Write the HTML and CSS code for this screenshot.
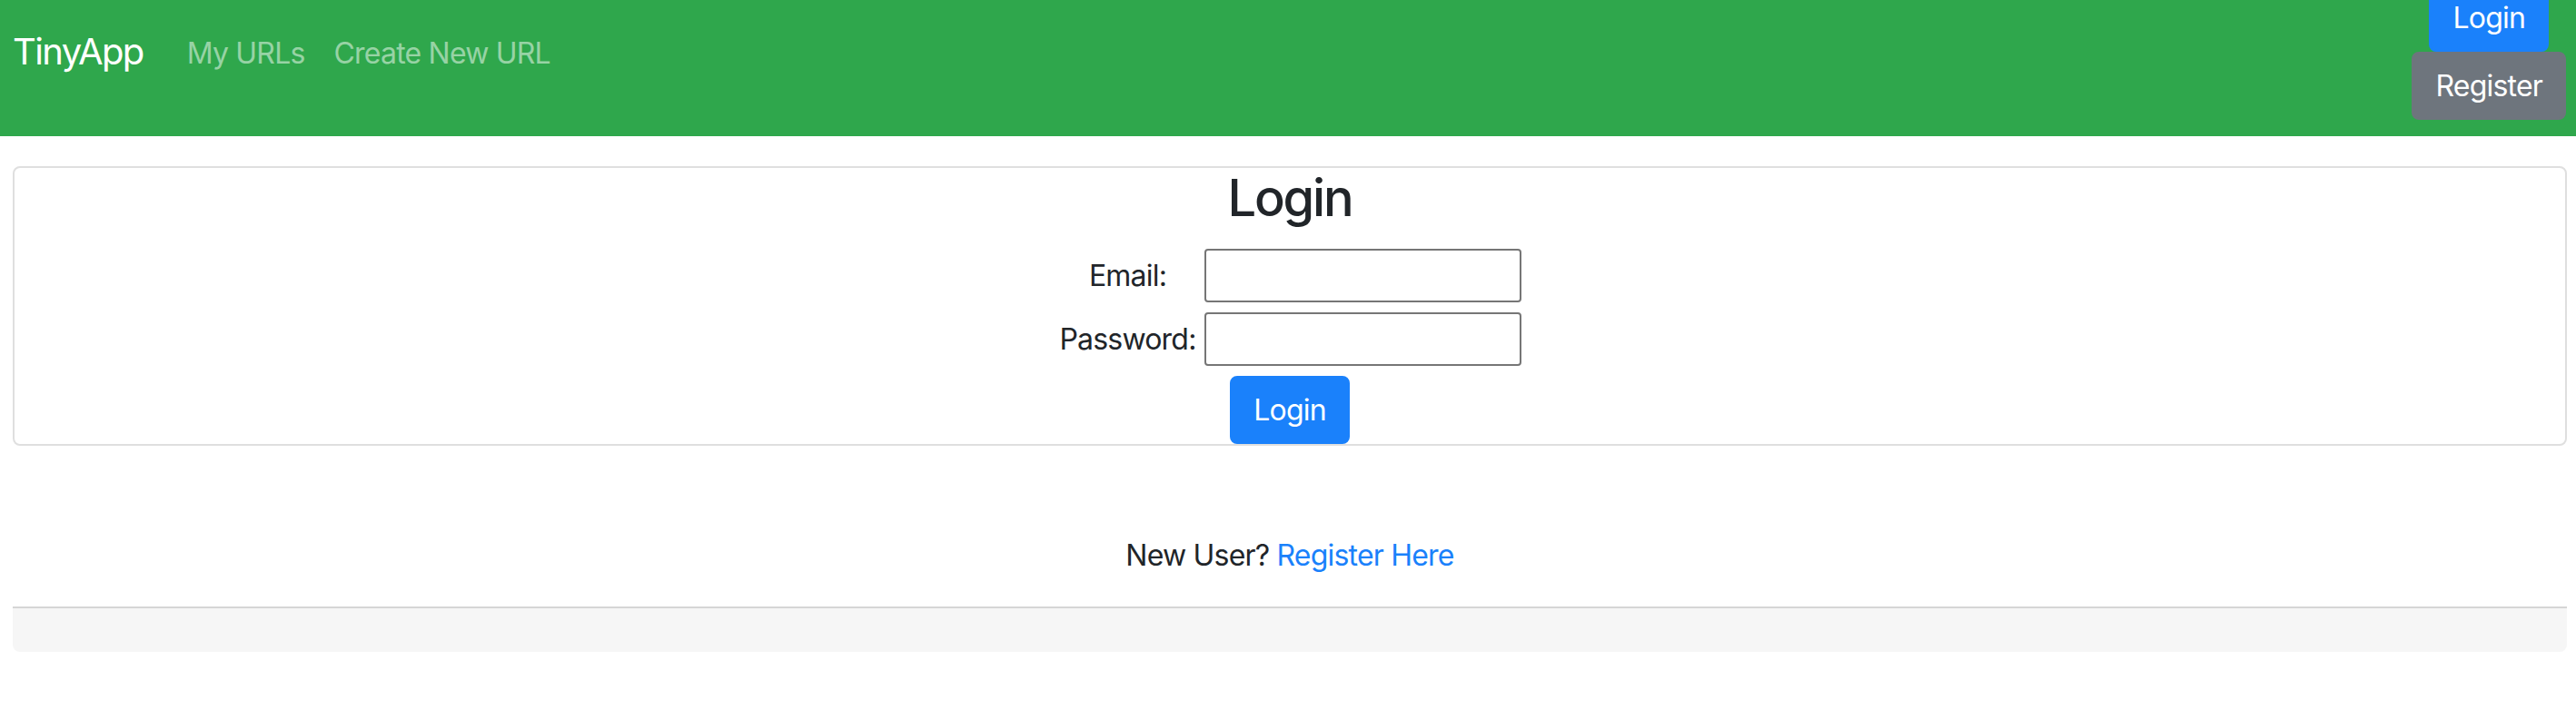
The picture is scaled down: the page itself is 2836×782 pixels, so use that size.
FILE: index.html
```html
<!DOCTYPE html>
<html lang="en">
<head>
<meta charset="utf-8">
<title>TinyApp - Login</title>
<link rel="stylesheet" href="styles.css">
</head>
<body>
<nav class="navbar">
  <div class="nav-row">
    <a class="brand" href="#">TinyApp</a>
    <a class="nav-link" href="#">My URLs</a>
    <a class="nav-link" href="#">Create New URL</a>
    <div class="auth">
      <button class="btn btn-primary" type="button">Login</button>
      <button class="btn btn-secondary" type="button">Register</button>
    </div>
  </div>
</nav>
<main class="page">
  <section class="card">
    <h3 class="card-title">Login</h3>
    <form class="login-form">
      <div class="fields">
        <label class="field-label" for="email">Email:</label>
        <input class="field-input" id="email" type="text">
        <label class="field-label" for="password">Password:</label>
        <input class="field-input" id="password" type="password">
      </div>
      <button class="btn btn-primary submit" type="button">Login</button>
    </form>
  </section>
  <p class="signup">New User? <a class="signup-link" href="#">Register Here</a></p>
  <footer class="footer"></footer>
</main>
</body>
</html>
```

FILE: styles.css
```css
html, body {
  margin: 0;
  padding: 0;
}

body {
  font-family: Inter, "Noto Sans", "Liberation Sans", sans-serif;
  font-size: 32px;
  line-height: 48px;
  letter-spacing: -0.025em;
  color: #212529;
  background: #ffffff;
}

.navbar {
  height: 150px;
  background: #2fa74c;
  padding: 0 11px 0 14px;
  box-sizing: border-box;
}

.nav-row {
  height: 114px;
  display: flex;
  align-items: center;
}

.brand {
  font-size: 40px;
  line-height: 60px;
  letter-spacing: -0.04em;
  color: #ffffff;
  text-decoration: none;
  margin-right: 32px;
}

.nav-link {
  padding: 3px 16px 0;
  font-size: 32px;
  color: rgba(255, 255, 255, 0.5);
  text-decoration: none;
}

.auth {
  margin-left: auto;
  display: flex;
  flex-direction: column;
  align-items: center;
}

.btn {
  font-family: inherit;
  font-size: 32px;
  line-height: 47px;
  letter-spacing: -0.025em;
  font-weight: 400;
  padding: 12px 24px;
  border: 2px solid transparent;
  border-radius: 8px;
  color: #ffffff;
  cursor: pointer;
}

.btn-primary {
  background: #1a81fb;
  border-color: #1a81fb;
}

.btn-secondary {
  background: #6e757d;
  border-color: #6e757d;
}

.page {
  padding: 0 10px 0 14px;
}

.card {
  margin-top: 33px;
  border: 2px solid #dfdfdf;
  border-radius: 8px;
  text-align: center;
}

.card-title {
  margin: 0;
  font-size: 56px;
  line-height: 67px;
  letter-spacing: -0.04em;
  font-weight: 500;
}

.login-form {
  display: flex;
  flex-direction: column;
  align-items: center;
}

.fields {
  margin-top: 22px;
  display: grid;
  grid-template-columns: 152px 349px;
  column-gap: 8px;
  row-gap: 11px;
  align-items: center;
}

.field-label {
  text-align: center;
}

.field-input {
  box-sizing: border-box;
  width: 349px;
  height: 59px;
  border: 2px solid #767676;
  border-radius: 4px;
  background: #ffffff;
  font-size: 26px;
  padding: 2px 4px;
}

.submit {
  margin-top: 11px;
}

.signup {
  margin: 97px 0 0;
  text-align: center;
}

.signup-link {
  color: #1a81fb;
  text-decoration: none;
}

.footer {
  margin-top: 32px;
  height: 50px;
  box-sizing: border-box;
  border-top: 2px solid #d6d6d6;
  background: #f6f6f6;
  border-radius: 0 0 8px 8px;
}
```
